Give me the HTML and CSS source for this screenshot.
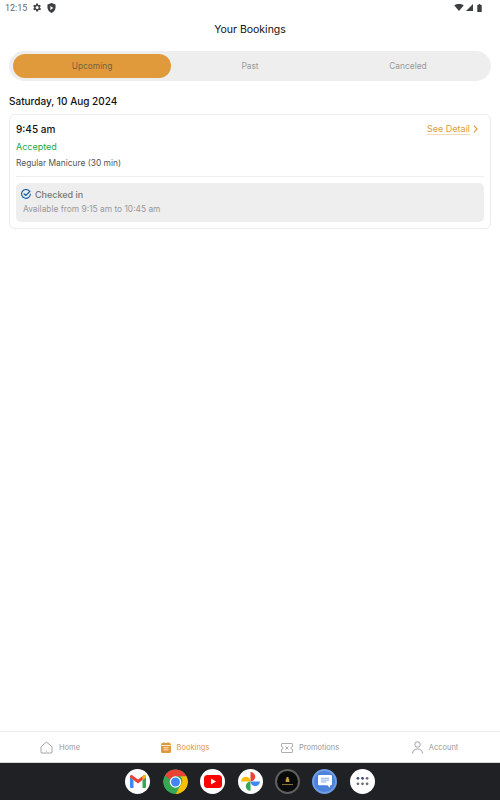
FILE: index.html
```html
<!DOCTYPE html>
<html lang="en">

<head>
    <meta charset="UTF-8" />
    <meta name="viewport" content="width=device-width, initial-scale=1.0" />
    <title>Your Bookings</title>
    <link rel="stylesheet" href="styles.css">
</head>

<body>
    <!-- Status bar -->
    <div class="status-bar">
        <div class="status-left">
            <span class="clock">12:15</span>
            <svg class="status-icon" width="11" height="11" viewBox="0 0 24 24"><path fill="#3c4043" d="M19.4 13a7.5 7.5 0 0 0 0-2l2.1-1.600-2-3.500-2.500 1a7.600 7.600 0 0 0-1.700-1L15.400 3.200h-4l-.4 2.700a7.600 7.600 0 0 0-1.700 1l-2.500-1-2 3.500L6.900 11a7.500 7.500 0 0 0 0 2l-2.100 1.600 2 3.500 2.500-1a7.600 7.600 0 0 0 1.700 1l.4 2.700h4l.4-2.700a7.600 7.600 0 0 0 1.700-1l2.500 1 2-3.500zM13.400 15.500a3.500 3.500 0 1 1 0-7 3.500 3.500 0 0 1 0 7z"/></svg>
            <svg class="status-icon shield" width="9" height="10" viewBox="0 0 20 22"><path fill="#3c4043" d="M10 0 1 3v7c0 5.500 3.800 10.300 9 12 5.200-1.700 9-6.500 9-12V3z"/><path fill="#fff" d="M7.500 6.500 14 11l-6.500 4.500z"/></svg>
        </div>
        <div class="status-right">
            <svg width="10" height="7" viewBox="0 0 12 9"><path fill="#3c4043" d="M0 1.800C1.600.6 3.700 0 6 0s4.400.6 6 1.800L6 9z"/></svg>
            <svg width="7" height="7" viewBox="0 0 9 9"><path fill="#3c4043" d="M9 0v9H0z"/></svg>
            <svg class="battery" width="5" height="8" viewBox="0 0 5 9"><path fill="#3c4043" d="M1.500 0h2v1H5v8H0V1h1.500z"/></svg>
        </div>
    </div>

    <h1 class="page-title">Your Bookings</h1>

    <div class="tabs">
        <div class="tab active">Upcoming</div>
        <div class="tab">Past</div>
        <div class="tab">Canceled</div>
    </div>

    <main class="content">
        <h2 class="date">Saturday, 10 Aug 2024</h2>

        <div class="card">
            <div class="card-top">
                <span class="time">9:45 am</span>
                <span class="detail"><span class="detail-link">See Detail</span>
                    <svg width="5" height="8" viewBox="0 0 5 8"><path fill="none" stroke="#e09a3c" stroke-width="1.100" d="M.8.6 4.200 4 .8 7.400"/></svg>
                </span>
            </div>
            <div class="state">Accepted</div>
            <div class="service">Regular Manicure (30 min)</div>
            <div class="checkin">
                <div class="checkin-title">
                    <svg width="10" height="10" viewBox="0 0 20 20"><path fill="none" stroke="#1a5fa8" stroke-width="2.200" stroke-linecap="round" d="M17 4.500A8.800 8.800 0 1 0 18.800 10"/><path fill="none" stroke="#1a5fa8" stroke-width="2.200" stroke-linecap="round" stroke-linejoin="round" d="m6 9.500 3.500 3.500L18 4.500"/></svg>
                    <span>Checked in</span>
                </div>
                <div class="checkin-note">Available from 9:15 am to 10:45 am</div>
            </div>
        </div>
    </main>

    <!-- Bottom navigation -->
    <nav class="bottom-nav">
        <div class="nav-item">
            <svg width="13" height="13" viewBox="0 0 26 26"><path fill="none" stroke="#8b8f94" stroke-width="1.600" stroke-linejoin="round" d="M2 11.500 13 2l11 9.500V22a2 2 0 0 1-2 2H4a2 2 0 0 1-2-2z"/><path stroke="#8b8f94" stroke-width="1.600" d="M12 20h2"/></svg>
            <span>Home</span>
        </div>
        <div class="nav-item current">
            <svg width="10" height="11" viewBox="0 0 20 22"><path fill="#e09a3c" d="M5 0h2v2h6V0h2v2h2a3 3 0 0 1 3 3v14a3 3 0 0 1-3 3H3a3 3 0 0 1-3-3V5a3 3 0 0 1 3-3h2z"/><path stroke="#fff" stroke-width="1.500" d="M0 7h20M5 11.500h10M5 15.500h10"/></svg>
            <span>Bookings</span>
        </div>
        <div class="nav-item">
            <svg width="12" height="10" viewBox="0 0 24 20"><path fill="none" stroke="#8b8f94" stroke-width="1.400" stroke-linejoin="round" d="M2 1h20a1 1 0 0 1 1 1v5a3 3 0 0 0 0 6v5a1 1 0 0 1-1 1H2a1 1 0 0 1-1-1v-5a3 3 0 0 0 0-6V2a1 1 0 0 1 1-1z"/><path stroke="#8b8f94" stroke-width="1.400" d="m9 7 6 6M15 7l-6 6"/></svg>
            <span>Promotions</span>
        </div>
        <div class="nav-item">
            <svg width="11" height="13" viewBox="0 0 22 26"><circle cx="11" cy="7" r="5.500" fill="none" stroke="#8b8f94" stroke-width="1.700"/><path fill="none" stroke="#8b8f94" stroke-width="1.700" d="M1 25c0-6 4.500-9 10-9s10 3 10 9"/></svg>
            <span>Account</span>
        </div>
    </nav>

    <!-- Launcher dock -->
    <div class="dock">
        <div class="app white">
            <svg width="16" height="13" viewBox="0 0 16 13"><path fill="#4285f4" d="M0 2v10a1 1 0 0 0 1 1h2.500V5z"/><path fill="#34a853" d="M16 2v10a1 1 0 0 1-1 1h-2.500V5z"/><path fill="#ea4335" d="M3.500 5 0 2.500V1.500C0 .3 1.300-.4 2.300.3L8 4.500 13.700.3c1-.7 2.300 0 2.300 1.200v1L12.500 5 8 8.400z"/><path fill="#fbbc04" d="M12.500 1.500V5L16 2.500V1.500C16 .3 14.700-.4 13.700.3z"/></svg>
        </div>
        <div class="app chrome">
            <svg width="26" height="26" viewBox="0 0 26 26"><circle cx="13" cy="13" r="13" fill="#34a853"/><path fill="#ea4335" d="M2 6C4.300 2.400 8.400 0 13 0c5 0 9.300 2.800 11.500 7H13a6 6 0 0 0-5.600 3.800z"/><path fill="#fbbc04" d="M24.500 7A13 13 0 0 1 13 26l5.200-10a6 6 0 0 0-.2-9z"/><circle cx="13" cy="13" r="6" fill="#fff"/><circle cx="13" cy="13" r="4.700" fill="#4285f4"/></svg>
        </div>
        <div class="app white">
            <svg width="18" height="13" viewBox="0 0 18 13"><rect width="18" height="13" rx="3.500" fill="#f00"/><path fill="#fff" d="m7 3.500 5 3-5 3z"/></svg>
        </div>
        <div class="app white">
            <svg width="19" height="19" viewBox="0 0 20 20"><path fill="#fbbc04" d="M0 10a5 5 0 0 1 10 0z"/><path fill="#ea4335" d="M10 0a5 5 0 0 1 0 10z"/><path fill="#4285f4" d="M20 10a5 5 0 0 1-10 0z"/><path fill="#34a853" d="M10 20a5 5 0 0 1 0-10z"/></svg>
        </div>
        <div class="app salon">
            <svg width="11" height="9" viewBox="0 0 11 9"><path fill="#c9a13c" d="M4.500 0h2v1.500l.8 1v2.500H3.700V2.500l.8-1z"/><path stroke="#a98a3c" stroke-width=".8" d="M0 7.500h11"/></svg>
        </div>
        <div class="app messages">
            <svg width="14" height="13" viewBox="0 0 15 14"><path fill="#fff" d="M1 0h13a1 1 0 0 1 1 1v9a1 1 0 0 1-1 1h-1v3l-3-3H1a1 1 0 0 1-1-1V1a1 1 0 0 1 1-1z"/><path stroke="#7fa6e6" d="M3 3.500h9M3 5.500h9M3 7.500h6"/></svg>
        </div>
        <div class="app white">
            <svg width="13" height="11" viewBox="0 0 14 12"><g fill="#3c4a78"><circle cx="2" cy="2.500" r="1.500"/><circle cx="7" cy="2.500" r="1.500"/></g><circle cx="12" cy="2.500" r="1.500" fill="#7a5f88"/><g fill="#6a6e78"><circle cx="2" cy="8.500" r="1.500"/><circle cx="7" cy="8.500" r="1.500"/><circle cx="12" cy="8.500" r="1.500"/></g></svg>
        </div>
    </div>
</body>

</html>
```

FILE: styles.css
```css
body {
    margin: 0;
    height: 800px;
    display: flex;
    flex-direction: column;
    background: #fff;
    font-family: Inter, 'Liberation Sans', sans-serif;
    color: #111;
    overflow: hidden;
}

.status-bar {
    height: 15px;
    padding: 0 18px 0 5px;
    display: flex;
    justify-content: space-between;
    align-items: center;
}

.status-left,
.status-right {
    display: flex;
    align-items: center;
}

.status-right {
    gap: 2px;
}

.battery {
    margin-left: 2px;
}

.clock {
    font-family: Roboto, sans-serif;
    font-size: 9px;
    color: #666;
    margin-right: 4px;
}

.shield {
    margin-left: 5px;
}

.page-title {
    margin: 8px 0 0;
    height: 14px;
    line-height: 14px;
    font-size: 10.5px;
    font-weight: 400;
    text-align: center;
}

.tabs {
    margin: 14px 9px 0 9px;
    height: 30px;
    padding: 3px 0 3px 4px;
    box-sizing: border-box;
    display: grid;
    grid-template-columns: repeat(3, 158px);
    background: #eeeeee;
    border-radius: 15px;
}

.tab {
    display: flex;
    justify-content: center;
    align-items: center;
    font-size: 8.4px;
    color: #999;
    border-radius: 12px;
}

.tab.active {
    background: #e09a3c;
    color: #75623f;
}

.content {
    flex: 1;
    padding: 0 9px;
}

.date {
    margin: 14px 0 6px;
    height: 13px;
    line-height: 13px;
    font-size: 10px;
    font-weight: 500;
}

.card {
    height: 115px;
    box-sizing: border-box;
    padding: 7px 6px 6px;
    border: 1px solid #ececec;
    border-radius: 6px;
}

.card-top {
    height: 14px;
    padding-right: 6px;
    display: flex;
    justify-content: space-between;
    align-items: center;
}

.time {
    font-size: 10px;
    font-weight: 500;
}

.detail {
    display: flex;
    align-items: center;
    gap: 3px;
    font-size: 9px;
    color: #e09a3c;
}

.detail-link {
    border-bottom: 1px solid #f3d9b5;
}

.state {
    margin-top: 4px;
    height: 13px;
    line-height: 13px;
    font-size: 9px;
    color: #22a84a;
}

.service {
    margin-top: 4px;
    height: 13px;
    line-height: 13px;
    font-size: 8.4px;
    color: #555;
    padding-bottom: 6px;
    border-bottom: 1px solid #eeeeee;
}

.checkin {
    margin-top: 6px;
    height: 39px;
    box-sizing: border-box;
    padding: 5px 7px;
    background: #eeeeee;
    border-radius: 5px;
}

.checkin-title {
    display: flex;
    align-items: center;
    gap: 4px;
    height: 12px;
    margin-left: -2px;
    font-size: 9px;
    font-weight: 500;
    color: #777;
}

.checkin-note {
    margin-top: 3px;
    height: 12px;
    line-height: 12px;
    font-size: 8.4px;
    color: #999;
}

.bottom-nav {
    height: 31px;
    display: grid;
    grid-template-columns: repeat(4, 1fr);
    border-top: 1px solid #eeeeee;
    box-shadow: inset 0 -1px 0 #d8d8d8;
}

.nav-item {
    padding-right: 5px;
    display: flex;
    justify-content: center;
    align-items: center;
    gap: 6px;
    font-size: 7.5px;
    color: #999;
}

.nav-item.current {
    color: #e09a3c;
}

.dock {
    height: 37px;
    background: #202124;
    display: flex;
    justify-content: center;
    align-items: center;
    gap: 12.4px;
}

.app {
    width: 25px;
    height: 25px;
    border-radius: 50%;
    display: flex;
    justify-content: center;
    align-items: center;
    overflow: hidden;
}

.app.white {
    background: #fff;
}

.app.salon {
    box-sizing: border-box;
    background: #0a0a0a;
    border: 2px solid #5f6060;
}

.app.messages {
    background: #4a82dc;
    box-sizing: border-box;
    border: 2px solid #6f9de6;
}
```
